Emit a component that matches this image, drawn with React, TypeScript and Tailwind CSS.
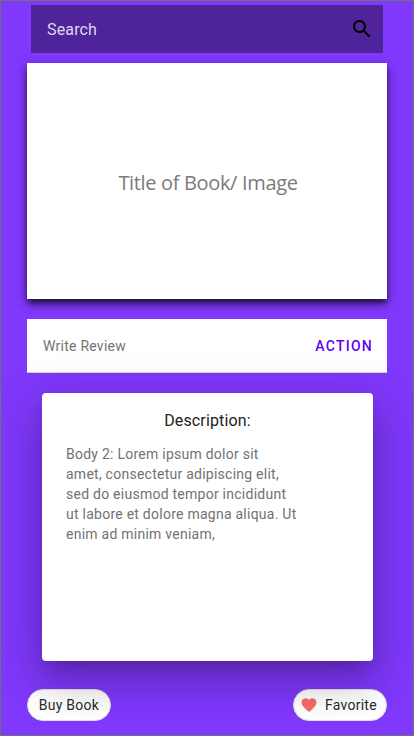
import React from "react";

function SearchBar() {
  return (
    <div className="mx-[30px] flex h-12 w-[352px] shrink-0 items-center justify-between bg-[#4f2399] pr-[9px] pl-4">
      <span className="pt-[2px] text-base leading-6 tracking-[0.15px] text-[#dfd6ed]">Search</span>
      <svg className="h-6 w-6" viewBox="0 0 24 24" fill="#000">
        <path d="M15.5 14h-.79l-.28-.27A6.471 6.471 0 0 0 16 9.5 6.5 6.5 0 1 0 9.5 16c1.61 0 3.09-.59 4.23-1.57l.27.28v.79l5 4.99L20.49 19l-4.99-5zm-6 0C7.01 14 5 11.99 5 9.5S7.01 5 9.5 5 14 7.01 14 9.5 11.99 14 9.5 14z" />
      </svg>
    </div>
  );
}

function Cover() {
  return (
    <div className="mx-[26px] mt-[10px] flex h-[236px] w-[360px] shrink-0 items-center justify-center bg-white pt-1 pl-[2px] shadow-[0_5px_6px_-1px_rgba(0,0,0,0.6),0_4px_10px_rgba(0,0,0,0.42)]">
      <span className="font-['Open_Sans','Noto_Sans',sans-serif] text-[20px] tracking-[-0.34px] whitespace-nowrap text-[#7a7a7a]">
        Title of Book/ Image
      </span>
    </div>
  );
}

function ReviewRow() {
  return (
    <div className="mx-[26px] mt-5 flex h-[54px] w-[360px] shrink-0 items-center justify-between border-b border-[#d5d5d5] bg-white pr-[14px] pl-4">
      <span className="text-sm tracking-[0.25px] text-[#727272]">Write Review</span>
      <span className="text-sm font-medium tracking-[1.25px] text-[#6200ee]">ACTION</span>
    </div>
  );
}

const lines = [
  "Body 2: Lorem ipsum dolor sit",
  "amet, consectetur adipiscing elit,",
  "sed do eiusmod tempor incididunt",
  "ut labore et dolore magna aliqua. Ut",
  "enim ad minim veniam,",
];

function Description() {
  return (
    <div className="relative z-10 mt-5 ml-[41px] h-[268px] w-[331px] shrink-0 rounded bg-white px-6 pt-4 shadow-[0_11px_15px_-7px_rgba(0,0,0,0.2),0_24px_38px_3px_rgba(0,0,0,0.14),0_9px_46px_8px_rgba(0,0,0,0.12)]">
      <h2 className="text-center text-base leading-6 tracking-[0.15px] text-[#212121]">Description:</h2>
      <p className="mt-[11px] text-sm leading-5 tracking-[0.25px] text-[#727272]">
        {lines.map((line) => (
          <span key={line} className="block whitespace-nowrap">
            {line}
          </span>
        ))}
      </p>
    </div>
  );
}

function Actions() {
  const chip =
    "flex h-8 items-center rounded-full border border-[#dedede] bg-white text-sm tracking-[0.25px] text-[#2b2b2b]";
  return (
    <div className="mx-[26px] mt-7 flex w-[360px] shrink-0 justify-between">
      <button className={`${chip} w-[84px] justify-center`}>Buy Book</button>
      <button className={`${chip} w-[94px] pl-[6px]`}>
        <svg className="mr-[7px] h-[18px] w-[18px] shrink-0" viewBox="0 0 24 24" fill="#f86c6c">
          <path d="M12 21.35l-1.45-1.32C5.4 15.36 2 12.28 2 8.5 2 5.42 4.42 3 7.5 3c1.74 0 3.41.81 4.5 2.09C13.09 3.81 14.76 3 16.5 3 19.58 3 22 5.42 22 8.5c0 3.78-3.4 6.86-8.55 11.54L12 21.35z" />
        </svg>
        Favorite
      </button>
    </div>
  );
}

export default function App() {
  return (
    <main className="flex h-[736px] w-[414px] flex-col overflow-hidden border border-[#707070] bg-[#8038fc] pt-1 font-['Roboto',sans-serif]">
      <SearchBar />
      <Cover />
      <ReviewRow />
      <Description />
      <Actions />
    </main>
  );
}
